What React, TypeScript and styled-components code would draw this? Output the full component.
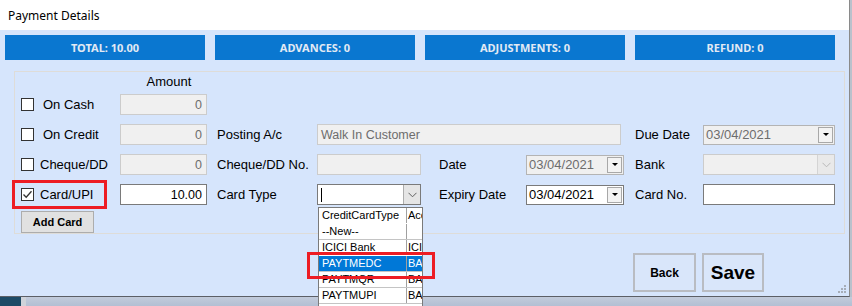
import React from "react";
import styled, { createGlobalStyle } from "styled-components";

const GlobalStyle = createGlobalStyle`
  html, body {
    margin: 0;
    padding: 0;
    background: #b9c1cc;
  }
  body {
    font-family: "Liberation Sans", Arial, sans-serif;
    width: 852px;
    height: 306px;
    overflow: hidden;
  }
`;

const Page = styled.div`
  display: flex;
  flex-direction: column;
  width: 852px;
  height: 306px;
`;

const Window = styled.div`
  width: 850px;
  height: 297px;
  display: flex;
  flex-direction: column;
  border-right: 1px solid #8a8a8a;
  border-bottom: 1px solid #5c5f66;
  box-sizing: border-box;
`;

const TitleBar = styled.div`
  height: 30px;
  flex: none;
  background: #ffffff;
  display: flex;
  align-items: center;
  padding-left: 8px;
  font-family: "Noto Sans", "Open Sans", sans-serif;
  font-size: 12px;
  color: #000;
`;

const Body = styled.div`
  position: relative;
  flex: 1;
  background: #d6e5fc;
  padding-top: 5px;
`;

const StatsRow = styled.div`
  display: flex;
  gap: 10px;
  margin-left: 5px;
`;

const StatBox = styled.div`
  width: 200px;
  height: 25px;
  background: #0a77d0;
  color: #e2eaf4;
  display: flex;
  align-items: center;
  justify-content: center;
  font-family: "Noto Sans", "Open Sans", sans-serif;
  font-weight: bold;
  font-size: 11px;
`;

const GroupBox = styled.div`
  margin: 11px 0 0 14px;
  width: 831px;
  height: 163px;
  box-sizing: border-box;
  border: 1px solid #dedcd8;
  padding: 2px 0 0 6px;
  display: flex;
  flex-direction: column;
`;

const Row = styled.div<{ $h?: number }>`
  display: grid;
  grid-template-columns: 99px 87px 110px 104px 105px 98px 79px 132px;
  height: ${(p) => p.$h ?? 21}px;
  align-items: center;
  font-size: 13px;
  color: #000;
`;

const Rows = styled.div`
  display: flex;
  flex-direction: column;
  gap: 9px;
  margin-top: 4px;
`;

const AmountHead = styled.div`
  grid-column: 2;
  text-align: center;
  padding-left: 11px;
  line-height: 16px;
`;

const CheckCell = styled.label<{ $gap: number }>`
  position: relative;
  display: flex;
  align-items: center;
  gap: ${(p) => p.$gap}px;
  height: 21px;
`;

const Box = styled.span`
  width: 13px;
  height: 13px;
  box-sizing: border-box;
  border: 1px solid #333333;
  background: #ffffff;
  display: flex;
  align-items: center;
  justify-content: center;
`;

const TextBox = styled.div<{ $on?: boolean; $w?: number; $right?: boolean }>`
  width: ${(p) => p.$w ?? 87}px;
  height: 21px;
  box-sizing: border-box;
  border: 1px solid ${(p) => (p.$on ? "#7a7a7a" : "#cccccc")};
  background: ${(p) => (p.$on ? "#ffffff" : "#f0f0f0")};
  color: ${(p) => (p.$on ? "#000" : "#6d6d6d")};
  font-size: 12.5px;
  display: flex;
  align-items: center;
  justify-content: ${(p) => (p.$right ? "flex-end" : "flex-start")};
  padding: 0 4px 0 3px;
`;

const FieldLabel = styled.div<{ $pad: number }>`
  padding-left: ${(p) => p.$pad}px;
  white-space: nowrap;
`;

const DateBox = styled.div<{ $on?: boolean; $w: number }>`
  width: ${(p) => p.$w}px;
  height: 20px;
  box-sizing: border-box;
  border: 1px solid ${(p) => (p.$on ? "#7a7a7a" : "#b4b4b4")};
  background: ${(p) => (p.$on ? "#ffffff" : "#f0f0f0")};
  color: ${(p) => (p.$on ? "#000" : "#6d6d6d")};
  display: flex;
  align-items: center;
  justify-content: space-between;
  padding: 0 1px 0 2px;
  font-size: 13px;
`;

const DropBtn = styled.span`
  width: 15px;
  height: 16px;
  box-sizing: border-box;
  border: 1px solid #a8a8a8;
  background: #f3f3f3;
  display: flex;
  align-items: center;
  justify-content: center;
  &::after {
    content: "";
    border-left: 3px solid transparent;
    border-right: 3px solid transparent;
    border-top: 3px solid #000;
  }
`;

const ComboBox = styled.div<{ $on?: boolean; $w: number }>`
  position: relative;
  width: ${(p) => p.$w}px;
  height: 21px;
  box-sizing: border-box;
  border: 1px solid ${(p) => (p.$on ? "#7a7a7a" : "#cccccc")};
  background: ${(p) => (p.$on ? "#ffffff" : "#f0f0f0")};
  display: flex;
  align-items: stretch;
  justify-content: space-between;
`;

const ComboText = styled.div`
  display: flex;
  align-items: center;
  padding-left: 3px;
`;

const Caret = styled.span`
  width: 1px;
  height: 14px;
  background: #000;
`;

const ChevronBtn = styled.span<{ $on?: boolean }>`
  width: 17px;
  box-sizing: border-box;
  border-left: 1px solid ${(p) => (p.$on ? "#adadad" : "#d4d4d4")};
  background: ${(p) => (p.$on ? "#e5e5e5" : "#e9e9e9")};
  display: flex;
  align-items: center;
  justify-content: center;
`;

const AddCardBtn = styled.button`
  margin-top: 6px;
  width: 73px;
  height: 23px;
  box-sizing: border-box;
  border: 1px solid #adadad;
  background: #e1e1e1;
  font-family: "Liberation Sans", Arial, sans-serif;
  font-weight: bold;
  font-size: 11px;
  color: #000;
  padding: 0;
`;

const Annot = styled.div<{ $l: number; $t: number; $w: number; $h: number }>`
  position: absolute;
  left: ${(p) => p.$l}px;
  top: ${(p) => p.$t}px;
  width: ${(p) => p.$w}px;
  height: ${(p) => p.$h}px;
  box-sizing: border-box;
  border: 3px solid #ed1c24;
  z-index: 10;
  pointer-events: none;
`;

const ListPopup = styled.div`
  position: absolute;
  left: 0;
  top: 22px;
  width: 105px;
  height: 102px;
  box-sizing: border-box;
  border: 1px solid #7a7a7a;
  background: #ffffff;
  z-index: 5;
  font-size: 11px;
  overflow: hidden;
`;

const ListRow = styled.div<{ $sel?: boolean; $line?: boolean }>`
  display: grid;
  grid-template-columns: 87px 1fr;
  height: 16px;
  box-sizing: border-box;
  line-height: 15px;
  border-bottom: 1px solid ${(p) => (p.$line ? "#c4c4c4" : "transparent")};
  background: ${(p) => (p.$sel ? "#0078d7" : "transparent")};
  color: ${(p) => (p.$sel ? "#ffffff" : "#000")};
`;

const ListCell = styled.div`
  padding-left: 3px;
  white-space: nowrap;
  overflow: hidden;
  & + & {
    border-left: 1px solid #a0a0a0;
    padding-left: 1px;
  }
`;

const Footer = styled.div`
  display: flex;
  justify-content: flex-end;
  gap: 6px;
  margin-top: 19px;
  padding-right: 85px;
`;

const ActionBtn = styled.button<{ $size: number; $w: number }>`
  width: ${(p) => p.$w}px;
  height: 39px;
  box-sizing: border-box;
  border: 2px solid #b9bcc2;
  background: #d9e6fa;
  font-family: "Liberation Sans", Arial, sans-serif;
  font-weight: bold;
  font-size: ${(p) => p.$size}px;
  color: #000;
  padding: 0;
`;

const Grip = styled.svg`
  position: absolute;
  right: 3px;
  bottom: 3px;
`;

const Desktop = styled.div`
  display: flex;
  height: 9px;
`;

const DeskTeal = styled.div`
  width: 21px;
  background: #1d4a66;
`;

const DeskEdge = styled.div`
  width: 5px;
  background: #cfd3da;
`;

const DeskRest = styled.div`
  flex: 1;
  background: linear-gradient(#c2cbdb, #b3bfd3);
`;

const Check = () => (
  <svg width="11" height="11" viewBox="0 0 11 11">
    <path d="M1.5 5.5 L4.2 8.3 L9.5 2.2" fill="none" stroke="#333" strokeWidth="1.3" />
  </svg>
);

const Chevron = ({ color }: { color: string }) => (
  <svg width="9" height="6" viewBox="0 0 9 6">
    <path d="M0.5 0.8 L4.5 4.8 L8.5 0.8" fill="none" stroke={color} strokeWidth="1" />
  </svg>
);

const cardTypes = [
  { name: "--New--", acc: "", line: true },
  { name: "ICICI Bank", acc: "ICICI", line: false },
  { name: "PAYTMEDC", acc: "BANK", sel: true, line: true },
  { name: "PAYTMQR", acc: "BANK", line: true },
  { name: "PAYTMUPI", acc: "BANK", line: true },
];

export default function App() {
  return (
    <Page>
      <GlobalStyle />
      <Window>
        <TitleBar>Payment Details</TitleBar>
        <Body>
          <StatsRow>
            <StatBox>TOTAL: 10.00</StatBox>
            <StatBox>ADVANCES: 0</StatBox>
            <StatBox>ADJUSTMENTS: 0</StatBox>
            <StatBox>REFUND: 0</StatBox>
          </StatsRow>

          <GroupBox>
            <Row $h={16}>
              <AmountHead>Amount</AmountHead>
            </Row>
            <Rows>
              <Row>
                <CheckCell $gap={9}>
                  <Box />
                  On Cash
                </CheckCell>
                <TextBox $right>0</TextBox>
              </Row>

              <Row>
                <CheckCell $gap={9}>
                  <Box />
                  On Credit
                </CheckCell>
                <TextBox $right>0</TextBox>
                <FieldLabel $pad={10}>Posting A/c</FieldLabel>
                <TextBox $w={304} style={{ gridColumn: "span 3" }}>
                  Walk In Customer
                </TextBox>
                <FieldLabel $pad={11}>Due Date</FieldLabel>
                <DateBox $w={132}>
                  03/04/2021
                  <DropBtn />
                </DateBox>
              </Row>

              <Row>
                <CheckCell $gap={6}>
                  <Box />
                  Cheque/DD
                </CheckCell>
                <TextBox $right>0</TextBox>
                <FieldLabel $pad={10}>Cheque/DD No.</FieldLabel>
                <TextBox $w={104} />
                <FieldLabel $pad={18}>Date</FieldLabel>
                <DateBox $w={98}>
                  03/04/2021
                  <DropBtn />
                </DateBox>
                <FieldLabel $pad={11}>Bank</FieldLabel>
                <ComboBox $w={132}>
                  <ComboText />
                  <ChevronBtn>
                    <Chevron color="#b8b8b8" />
                  </ChevronBtn>
                </ComboBox>
              </Row>

              <Row>
                <CheckCell $gap={6}>
                  <Box>
                    <Check />
                  </Box>
                  Card/UPI
                  <Annot $l={-9} $t={-4} $w={95} $h={29} />
                </CheckCell>
                <TextBox $on $right>
                  10.00
                </TextBox>
                <FieldLabel $pad={10}>Card Type</FieldLabel>
                <ComboBox $on $w={104}>
                  <ComboText>
                    <Caret />
                  </ComboText>
                  <ChevronBtn $on>
                    <Chevron color="#606060" />
                  </ChevronBtn>
                  <ListPopup>
                    <ListRow>
                      <ListCell>CreditCardType</ListCell>
                      <ListCell>Account</ListCell>
                    </ListRow>
                    {cardTypes.map((c) => (
                      <ListRow key={c.name} $sel={c.sel} $line={c.line}>
                        <ListCell>{c.name}</ListCell>
                        <ListCell>{c.acc}</ListCell>
                      </ListRow>
                    ))}
                  </ListPopup>
                  <Annot $l={-11} $t={67} $w={128} $h={27} />
                </ComboBox>
                <FieldLabel $pad={18}>Expiry Date</FieldLabel>
                <DateBox $on $w={98}>
                  03/04/2021
                  <DropBtn />
                </DateBox>
                <FieldLabel $pad={11}>Card No.</FieldLabel>
                <TextBox $on $w={132} />
              </Row>
            </Rows>
            <AddCardBtn>Add Card</AddCardBtn>
          </GroupBox>

          <Footer>
            <ActionBtn $w={63} $size={12}>
              Back
            </ActionBtn>
            <ActionBtn $w={62} $size={19}>
              Save
            </ActionBtn>
          </Footer>

          <Grip width="8" height="8" viewBox="0 0 8 8">
            {[
              [6, 0],
              [3, 3],
              [6, 3],
              [0, 6],
              [3, 6],
              [6, 6],
            ].map(([x, y]) => (
              <rect key={`${x}-${y}`} x={x} y={y} width="2" height="2" fill="#a6adb8" />
            ))}
          </Grip>
        </Body>
      </Window>
      <Desktop>
        <DeskTeal />
        <DeskEdge />
        <DeskRest />
      </Desktop>
    </Page>
  );
}
